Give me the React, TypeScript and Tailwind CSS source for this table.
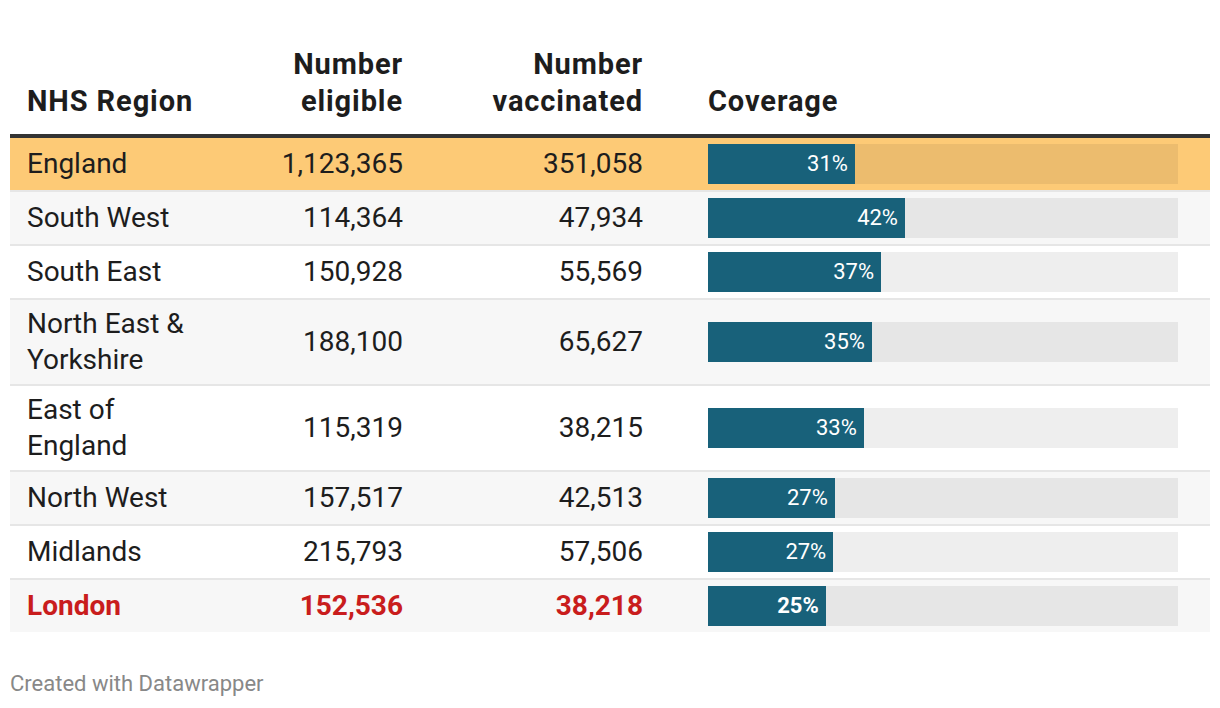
const rows = [
  { name: "England", eligible: 1123365, vaccinated: 351058, bg: "bg-[#fdca76]" },
  { name: "South West", eligible: 114364, vaccinated: 47934, bg: "bg-[#f7f7f7]" },
  { name: "South East", eligible: 150928, vaccinated: 55569, bg: "bg-white" },
  { name: "North East & Yorkshire", eligible: 188100, vaccinated: 65627, bg: "bg-[#f7f7f7]" },
  { name: "East of England", eligible: 115319, vaccinated: 38215, bg: "bg-white" },
  { name: "North West", eligible: 157517, vaccinated: 42513, bg: "bg-[#f7f7f7]" },
  { name: "Midlands", eligible: 215793, vaccinated: 57506, bg: "bg-white" },
  { name: "London", eligible: 152536, vaccinated: 38218, bg: "bg-[#f7f7f7]", highlight: true },
];

const fmt = (n: number) => n.toLocaleString("en-GB");

export default function App() {
  return (
    <div className="w-[1220px] h-[708px] bg-white px-[10px] pt-[46px] font-['Roboto','Liberation_Sans',sans-serif] text-[#1d1d1d]">
      <div className="flex items-end border-b-4 border-[#333] pb-[14px] text-[29px] font-bold leading-[37px] tracking-[0.9px]">
        <div className="ml-[17px] w-[185px]">NHS Region</div>
        <div className="w-[191px] text-right">
          Number
          <br />
          eligible
        </div>
        <div className="w-[240px] text-right">
          Number
          <br />
          vaccinated
        </div>
        <div className="ml-[65px] w-[470px]">Coverage</div>
      </div>

      {rows.map((r, i) => {
        const pct = r.vaccinated / r.eligible;
        return (
          <div
            key={r.name}
            className={`flex items-center py-[6px] text-[28px] leading-[36px] ${r.bg} ${
              i > 0 ? "border-t-2 border-[#e6e6e6]" : ""
            } ${r.highlight ? "font-bold text-[#c91d1d]" : ""}`}
          >
            <div className="ml-[17px] w-[185px]">{r.name}</div>
            <div className="w-[191px] text-right">{fmt(r.eligible)}</div>
            <div className="w-[240px] text-right">{fmt(r.vaccinated)}</div>
            <div className="ml-[65px] flex h-[40px] w-[470px] bg-black/[0.065]">
              <div
                className={`flex h-full items-center justify-end bg-[#18617a] pr-[7px] text-[22px] text-white ${
                  r.highlight ? "font-bold" : "font-normal"
                }`}
                style={{ width: `${pct * 470}px` }}
              >
                {Math.round(pct * 100)}%
              </div>
            </div>
          </div>
        );
      })}

      <div className="mt-[39px] text-[22px] leading-[26px] text-[#888]">Created with Datawrapper</div>
    </div>
  );
}
